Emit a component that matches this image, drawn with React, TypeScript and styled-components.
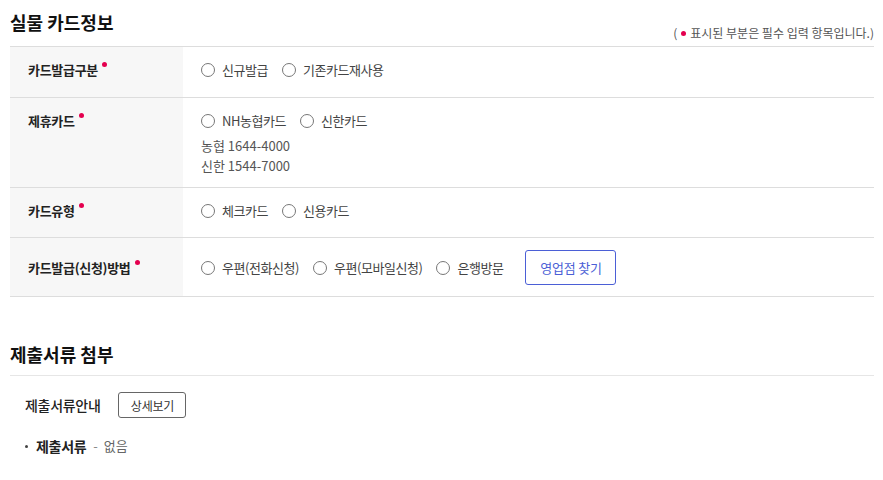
import React from 'react';
import styled, { createGlobalStyle } from 'styled-components';

const GlobalStyle = createGlobalStyle`
  html, body {
    margin: 0;
    padding: 0;
    background: #fff;
  }
  body {
    font-family: "Noto Sans CJK KR", "Noto Sans", sans-serif;
    color: #222;
    -webkit-font-smoothing: antialiased;
  }
`;

const Page = styled.div`
  width: 864px;
  padding: 0 9px 0 10px;
`;

const Section = styled.section<{ $gap?: number }>`
  margin-top: ${p => p.$gap ?? 0}px;
`;

const TitleRow = styled.div`
  display: flex;
  justify-content: space-between;
  align-items: flex-end;
  height: 46px;
  box-sizing: border-box;
  padding-bottom: 5px;
`;

const Title = styled.h2<{ $top?: number }>`
  margin: 0;
  font-size: 18px;
  font-weight: 700;
  line-height: 26px;
  color: #111;
  align-self: flex-start;
  padding-top: ${p => p.$top ?? 9}px;
`;

const Legend = styled.p`
  margin: 0;
  font-size: 12px;
  line-height: 16px;
  color: #555;
  display: flex;
  align-items: center;
`;

const Dot = styled.span<{ $top?: boolean }>`
  display: inline-block;
  width: 5px;
  height: 5px;
  border-radius: 50%;
  background: #e4004f;
  margin: 0 4px 0 4px;
  align-self: ${p => (p.$top ? 'flex-start' : 'center')};
  margin-top: ${p => (p.$top ? '3px' : '0')};
`;

const Table = styled.div`
  border-top: 1px solid #ddd;
`;

const Row = styled.div<{ $middle?: boolean; $min?: number }>`
  display: grid;
  grid-template-columns: 173px 1fr;
  min-height: ${p => p.$min ?? 49}px;
  border-bottom: 1px solid #ddd;
  align-items: ${p => (p.$middle ? 'center' : 'stretch')};
  background: linear-gradient(to right, #f7f7f7 173px, #fff 173px);
`;

const Label = styled.div`
  display: flex;
  align-items: flex-start;
  padding: 12px 0 11px 18px;
  font-size: 13px;
  font-weight: 700;
  line-height: 22px;
  color: #222;
  letter-spacing: -0.3px;
`;

const Cell = styled.div`
  padding: 12px 18px 11px;
  font-size: 13px;
  line-height: 22px;
  color: #444;
`;

const RadioGroup = styled.div`
  display: flex;
  align-items: center;
  gap: 14px;
`;

const RadioItem = styled.label`
  display: flex;
  align-items: center;
  gap: 7px;
  cursor: pointer;
  letter-spacing: -0.45px;
  white-space: nowrap;
`;

const RadioCircle = styled.span`
  width: 12px;
  height: 12px;
  border: 1px solid #777;
  border-radius: 50%;
  background: #fff;
  flex-shrink: 0;
`;

const Phones = styled.div`
  margin-top: 4px;
`;

const Phone = styled.div`
  color: #555;
  line-height: 20px;
`;

const OutlineButton = styled.button<{ $tone?: 'blue' | 'gray'; $w: number; $h: number; $ml?: number }>`
  width: ${p => p.$w}px;
  height: ${p => p.$h}px;
  margin-left: ${p => p.$ml ?? 0}px;
  padding: 0;
  border: 1px solid ${p => (p.$tone === 'blue' ? '#4b5fd6' : '#666')};
  border-radius: 3px;
  background: #fff;
  color: ${p => (p.$tone === 'blue' ? '#4b5fd6' : '#333')};
  font-family: inherit;
  font-size: ${p => (p.$tone === 'blue' ? 13 : 12)}px;
  letter-spacing: -0.2px;
  cursor: pointer;
`;

const SectionTitle = styled.div`
  height: 47px;
  box-sizing: border-box;
  border-bottom: 1px solid #e6e6e6;
`;

const GuideRow = styled.div`
  display: flex;
  align-items: center;
  gap: 18px;
  padding: 16px 0 0 15px;
  font-size: 14px;
  font-weight: 500;
  color: #222;
  letter-spacing: -0.3px;
`;

const BulletLine = styled.div`
  display: flex;
  align-items: center;
  padding: 17px 0 0 15px;
  font-size: 13px;
  line-height: 22px;
  color: #666;
  &::before {
    content: '';
    width: 3px;
    height: 3px;
    background: #444;
    border-radius: 50%;
    margin-right: 8px;
  }
`;

const Strong = styled.strong`
  color: #222;
  font-size: 14px;
  font-weight: 700;
  margin-right: 7px;
  letter-spacing: -0.3px;
`;

const Dash = styled.span`
  color: #888;
  margin-right: 6px;
`;

const Radio: React.FC<{ label: string }> = ({ label }) => (
  <RadioItem>
    <RadioCircle />
    {label}
  </RadioItem>
);

const rows = [
  { label: '카드발급구분', options: ['신규발급', '기존카드재사용'], min: 50 },
  { label: '제휴카드', options: ['NH농협카드', '신한카드'], phones: ['농협 1644-4000', '신한 1544-7000'] },
  { label: '카드유형', options: ['체크카드', '신용카드'] },
];

export default function App() {
  return (
    <Page>
      <GlobalStyle />
      <Section>
        <TitleRow>
          <Title>실물 카드정보</Title>
          <Legend>
            (<Dot />표시된 부분은 필수 입력 항목입니다.)
          </Legend>
        </TitleRow>
        <Table>
          {rows.map(r => (
            <Row key={r.label} $min={r.min}>
              <Label>
                {r.label}
                <Dot $top />
              </Label>
              <Cell>
                <RadioGroup>
                  {r.options.map(o => (
                    <Radio key={o} label={o} />
                  ))}
                </RadioGroup>
                {r.phones && (
                  <Phones>
                    {r.phones.map(p => <Phone key={p}>{p}</Phone>)}
                  </Phones>
                )}
              </Cell>
            </Row>
          ))}
          <Row $middle>
            <Label>
              카드발급(신청)방법
              <Dot $top />
            </Label>
            <Cell>
              <RadioGroup>
                <Radio label="우편(전화신청)" />
                <Radio label="우편(모바일신청)" />
                <Radio label="은행방문" />
                <OutlineButton $tone="blue" $w={91} $h={35} $ml={8}>
                  영업점 찾기
                </OutlineButton>
              </RadioGroup>
            </Cell>
          </Row>
        </Table>
      </Section>

      <Section $gap={32}>
        <SectionTitle>
          <Title $top={12}>제출서류 첨부</Title>
        </SectionTitle>
        <GuideRow>
          제출서류안내
          <OutlineButton $tone="gray" $w={68} $h={26}>상세보기</OutlineButton>
        </GuideRow>
        <BulletLine>
          <Strong>제출서류</Strong>
          <Dash>-</Dash>없음
        </BulletLine>
      </Section>
    </Page>
  );
}
